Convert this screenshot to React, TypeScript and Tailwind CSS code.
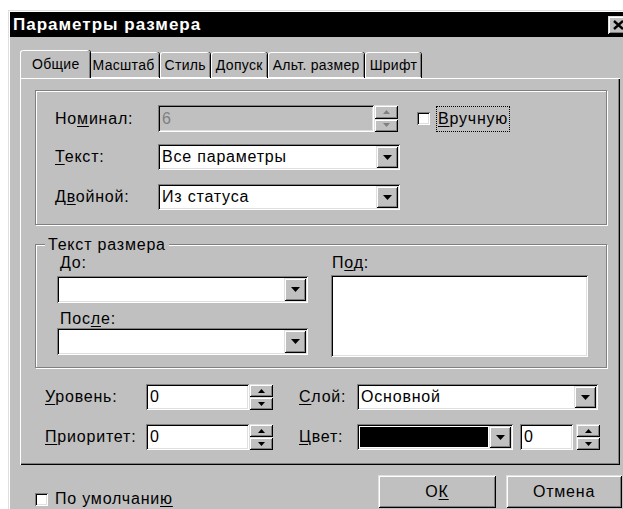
import React from "react";

const sunken =
  "shadow-[inset_1px_1px_0_#808080,inset_-1px_-1px_0_#ffffff,inset_2px_2px_0_#000000,inset_-2px_-2px_0_#dfdfdf]";
const raised =
  "bg-[#c0c0c0] shadow-[inset_1px_1px_0_#dfdfdf,inset_-1px_-1px_0_#000000,inset_2px_2px_0_#ffffff,inset_-2px_-2px_0_#808080]";
const etched = "border border-[#808080] shadow-[1px_1px_0_#ffffff,inset_1px_1px_0_#ffffff]";

function Arrow({ up = false, color = "#000", w = 9 }: { up?: boolean; color?: string; w?: number }) {
  const h = Math.ceil(w / 2);
  return (
    <svg width={w} height={h} viewBox={`0 0 ${w} ${h}`} className="block">
      {up ? (
        <polygon points={`${w / 2},0 ${w},${h} 0,${h}`} fill={color} />
      ) : (
        <polygon points={`0,0 ${w},0 ${w / 2},${h}`} fill={color} />
      )}
    </svg>
  );
}

function DropButton() {
  return (
    <div className={`${raised} w-[22px] shrink-0 flex items-center justify-center`}>
      <Arrow />
    </div>
  );
}

function Select({ width, height = 26, text }: { width: number; height?: number; text?: string }) {
  return (
    <div className={`bg-white ${sunken} flex p-[2px]`} style={{ width, height }}>
      <div className="flex-1 flex items-center pl-[2px] whitespace-nowrap overflow-hidden">{text}</div>
      <DropButton />
    </div>
  );
}

function Spin({ disabled = false, height = 26 }: { disabled?: boolean; height?: number }) {
  const c = disabled ? "#808080" : "#000";
  return (
    <div className="flex flex-col w-[24px] shrink-0" style={{ height }}>
      <div className={`${raised} flex-1 flex items-center justify-center`}>
        <Arrow up color={c} w={7} />
      </div>
      <div className={`${raised} flex-1 flex items-center justify-center`}>
        <Arrow color={c} w={7} />
      </div>
    </div>
  );
}

function Field({
  width,
  height = 26,
  text,
  disabled = false,
}: {
  width: number;
  height?: number;
  text?: string;
  disabled?: boolean;
}) {
  return (
    <div
      className={`${disabled ? "bg-[#c0c0c0] text-[#808080]" : "bg-white"} ${sunken} flex items-center pl-[4px] shrink-0`}
      style={{ width, height }}
    >
      {text}
    </div>
  );
}

function CheckBox() {
  return <div className={`w-[13px] h-[13px] bg-white ${sunken} shrink-0`} />;
}

function U({ children }: { children: React.ReactNode }) {
  return <span className="underline underline-offset-[2px]">{children}</span>;
}

const tabs = ["Общие", "Масштаб", "Стиль", "Допуск", "Альт. размер", "Шрифт"];

export default function App() {
  return (
    <div className="w-[623px] h-[509px] bg-white overflow-hidden font-['Liberation_Sans',Arial,sans-serif] text-[16px] tracking-[0.8px] text-black leading-none">
      <div className="ml-[8px] mt-[10px] w-[626px] h-[520px] bg-[#c0c0c0] shadow-[inset_1px_1px_0_#dfdfdf,inset_2px_2px_0_#ffffff] p-[2px]">
        {/* caption */}
        <div className="h-[25px] bg-black flex items-center justify-between pl-[3px] pr-[2px]">
          <span className="text-white font-bold text-[17px] tracking-[1px]">Параметры размера</span>
          <div className={`${raised} w-[22px] h-[18px] flex items-center pl-[5px]`}>
            <svg width="11" height="10" viewBox="0 0 11 10">
              <path d="M1 1 L10 9 M10 1 L1 9" stroke="#000" strokeWidth="2.4" />
            </svg>
          </div>
        </div>

        {/* tab strip */}
        <div className="mt-[13px] pl-[10px] flex items-end h-[28px] text-[14px] tracking-[0.3px]">
          {tabs.map((t, i) => (
            <div
              key={t}
              className={
                i === 0
                  ? "relative z-10 h-[28px] pl-[11px] pr-[10px] -mr-[2px] bg-[#c0c0c0] rounded-t-[3px] border-t border-l border-white shadow-[inset_-1px_0_0_#808080,1px_0_0_#000000] flex items-center pb-[2px]"
                  : "h-[26px] px-[4px] bg-[#c0c0c0] rounded-t-[3px] border-t border-l border-white shadow-[inset_-1px_0_0_#808080,1px_0_0_#000000] flex items-center mr-[1px] border-b border-b-white"
              }
            >
              {t}
            </div>
          ))}
        </div>

        {/* page */}
        <div className="ml-[10px] w-[600px] h-[387px] border-l border-t border-white shadow-[inset_-1px_-1px_0_#000000,inset_-2px_-2px_0_#808080] pl-[14px] pt-[11px]">
          {/* first group */}
          <div className={`${etched} w-[572px] h-[135px] pt-[14px] pl-[19px] flex flex-col`}>
            <div className="flex items-center h-[27px]">
              <span className="w-[103px]">
                Но<U>м</U>инал:
              </span>
              <Field width={216} height={27} text="6" disabled />
              <Spin disabled height={27} />
              <div className="ml-[19px] flex items-center">
                <CheckBox />
                <span className="ml-[6px] border border-dotted border-black px-[1px] py-[4px]">
                  <U>В</U>ручную
                </span>
              </div>
            </div>
            <div className="flex items-center h-[26px] mt-[12px]">
              <span className="w-[103px]">
                <U>Т</U>екст:
              </span>
              <Select width={242} text="Все параметры" />
            </div>
            <div className="flex items-center h-[26px] mt-[14px]">
              <span className="w-[103px]">
                Д<U>в</U>ойной:
              </span>
              <Select width={242} text="Из статуса" />
            </div>
          </div>

          {/* second group */}
          <div className={`${etched} w-[572px] h-[124px] mt-[19px] relative pl-[21px] pt-[10px] flex`}>
            <span className="absolute -top-[8px] left-[9px] bg-[#c0c0c0] px-[3px]">Текст размера</span>
            <div className="flex flex-col w-[251px]">
              <span className="h-[15px] pl-[3px]">
                <U>Д</U>о:
              </span>
              <div className="mt-[6px]">
                <Select width={251} height={27} />
              </div>
              <span className="h-[15px] pl-[3px] mt-[8px]">
                Пос<U>л</U>е:
              </span>
              <div className="mt-[2px]">
                <Select width={251} height={27} />
              </div>
            </div>
            <div className="flex flex-col ml-[23px]">
              <span className="h-[15px] pl-[1px]">
                П<U>о</U>д:
              </span>
              <div className={`bg-white ${sunken} w-[257px] h-[82px] mt-[5px]`} />
            </div>
          </div>

          {/* level / priority / layer / colour */}
          <div className="mt-[16px] flex flex-col pl-[10px]">
            <div className="flex items-center h-[26px]">
              <span className="w-[101px]">
                <U>У</U>ровень:
              </span>
              <Field width={103} text="0" />
              <Spin />
              <span className="ml-[26px] w-[58px]">
                <U>С</U>лой:
              </span>
              <Select width={241} text="Основной" />
            </div>
            <div className="flex items-center h-[26px] mt-[14px]">
              <span className="w-[101px]">
                <U>П</U>риоритет:
              </span>
              <Field width={103} text="0" />
              <Spin />
              <span className="ml-[26px] w-[58px]">
                <U>Ц</U>вет:
              </span>
              <div className={`bg-white ${sunken} flex p-[2px] w-[156px] h-[26px]`}>
                <div className="flex-1 bg-black ml-[1px] my-[1px] mr-[1px]" />
                <DropButton />
              </div>
              <div className="ml-[7px]">
                <Field width={53} text="0" />
              </div>
              <div className="ml-[3px]">
                <Spin />
              </div>
            </div>
          </div>
        </div>

        {/* footer */}
        <div className="flex items-start mt-[10px] pl-[25px]">
          <div className="flex items-center mt-[16px]">
            <CheckBox />
            <span className="ml-[7px]">
              По умолчани<U>ю</U>
            </span>
          </div>
          <div className={`${raised} ml-auto w-[118px] h-[33px] flex items-center justify-center`}>
            О<U>К</U>
          </div>
          <div className={`${raised} ml-[10px] mr-[10px] w-[116px] h-[33px] flex items-center justify-center`}>
            Отмена
          </div>
        </div>
      </div>
    </div>
  );
}
